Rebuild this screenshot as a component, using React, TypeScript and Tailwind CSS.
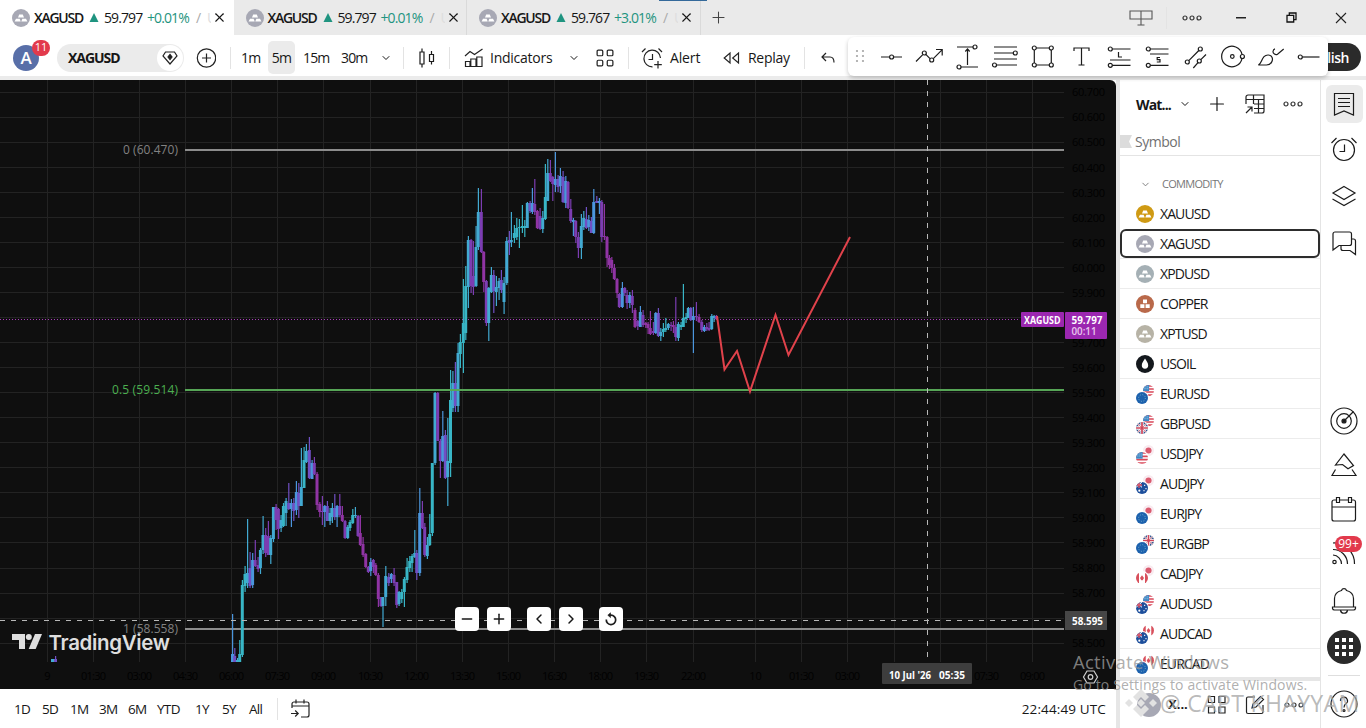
import React from 'react';
import { ChevronDown, ChevronLeft, ChevronRight, Minus, Plus, X } from 'lucide-react';

type Candle = [number, number, number, number, number, number];

// x, high, low, body top, body bottom, 1 = up / 0 = down
const candles: Candle[] = [
  [52.5, 659, 662, 659, 662, 1], [55.5, 656, 662, 659, 662, 0],
  [232.5, 614, 662, 654, 662, 1], [234.7, 648, 662, 656, 662, 0], [237.5, 658, 662, 660, 662, 1], [239.7, 640, 662, 654, 662, 1],
  [242.3, 580, 657, 585, 655, 1], [245, 566, 592, 574, 586, 1], [247.5, 519, 588, 573, 583, 1], [250, 552, 588, 568, 586, 0],
  [252.6, 553, 588, 560, 585, 1], [255.2, 540, 567, 560, 566, 0], [258, 557, 572, 565, 569, 0], [260.4, 548, 574, 550, 568, 1],
  [263, 516, 554, 535, 550, 1], [265.6, 528, 557, 535, 553, 0], [268.3, 521, 555, 536, 555, 0], [270.7, 535, 564, 538, 555, 1],
  [273.4, 507, 542, 507, 539, 1], [276, 504, 530, 507, 520, 0], [278.4, 508, 539, 509, 529, 0], [281, 515, 532, 520, 528, 1],
  [283.4, 503, 527, 506, 526, 1], [286, 498, 526, 501, 513, 1], [288.7, 483, 510, 503, 509, 0], [291.3, 499, 527, 503, 509, 1],
  [293.7, 498, 521, 503, 511, 0], [296.3, 481, 515, 492, 510, 1], [298.7, 483, 518, 493, 506, 0], [301.3, 448, 506, 487, 506, 1],
  [304, 447, 488, 460, 488, 1], [306.3, 444, 463, 451, 462, 1], [309.3, 437, 479, 450, 478, 0], [312, 460, 479, 463, 479, 1],
  [314.3, 457, 475, 463, 474, 0], [317, 472, 510, 474, 505, 0], [319.7, 502, 517, 504, 512, 0], [322.3, 496, 525, 511, 512, 0],
  [324.7, 505, 527, 506, 512, 1], [327.3, 501, 521, 506, 521, 0], [330, 508, 525, 513, 521, 1], [332.3, 503, 523, 508, 517, 1],
  [334.7, 494, 520, 508, 517, 0], [337, 505, 527, 506, 517, 1], [339.7, 494, 517, 506, 515, 0], [342.3, 506, 522, 515, 521, 0],
  [345, 520, 539, 521, 538, 0], [347.7, 525, 539, 527, 538, 1], [350, 520, 531, 522, 528, 1], [352.7, 509, 524, 515, 523, 1],
  [355.3, 507, 518, 515, 516, 1], [358, 515, 537, 516, 536, 0], [360.3, 515, 546, 533, 545, 0], [363, 537, 557, 544, 555, 0],
  [365.7, 553, 568, 554, 567, 0], [368.3, 566, 573, 567, 572, 0], [370.7, 558, 576, 562, 571, 1], [373.3, 559, 573, 560, 567, 0],
  [375.7, 563, 576, 565, 575, 0], [378.3, 573, 607, 575, 599, 0], [381, 597, 607, 597, 606, 0], [382.9, 597, 627, 597, 606, 1],
  [385.7, 566, 606, 576, 597, 1], [388.7, 573, 586, 577, 583, 0], [391.3, 573, 583, 574, 579, 1], [394, 568, 586, 575, 583, 0],
  [396.7, 582, 608, 582, 605, 0], [399, 591, 606, 592, 604, 1], [401.7, 589, 603, 592, 599, 1], [404.3, 577, 607, 579, 592, 1],
  [407, 558, 583, 567, 580, 1], [409.7, 556, 572, 561, 568, 1], [412, 554, 572, 556, 563, 1], [414.7, 530, 558, 553, 557, 1],
  [416.7, 550, 580, 553, 573, 0], [419.7, 488, 576, 513, 573, 1], [422.3, 501, 529, 513, 528, 0], [424.7, 523, 557, 527, 555, 0],
  [427.3, 537, 559, 545, 556, 1], [429.7, 514, 546, 534, 545, 1], [432.3, 463, 536, 463, 533, 1], [435, 392, 465, 393, 463, 1],
  [437.7, 392, 441, 393, 441, 0], [440.3, 439, 478, 441, 461, 0], [442.7, 411, 462, 436, 461, 1], [445.3, 430, 479, 435, 478, 0],
  [447.7, 418, 506, 461, 477, 1], [450.5, 370, 477, 400, 463, 1], [452.8, 371, 412, 383, 408, 1], [455.3, 362, 412, 383, 406, 0],
  [458, 343, 412, 353, 406, 1], [460.3, 334, 368, 342, 354, 1], [463.3, 279, 373, 323, 343, 1], [465.7, 266, 340, 286, 333, 1],
  [468.3, 236, 308, 240, 287, 1], [471, 239, 293, 240, 286, 0], [473.3, 241, 295, 276, 287, 0], [476, 226, 287, 247, 286, 1],
  [478.3, 188, 250, 212, 247, 1], [481.3, 189, 253, 212, 252, 0], [483.7, 251, 292, 252, 282, 0], [486.3, 280, 326, 281, 323, 0],
  [488.7, 287, 341, 288, 323, 1], [491.3, 267, 293, 275, 292, 1], [493.7, 270, 313, 275, 291, 0], [496.3, 276, 306, 287, 292, 1],
  [499, 278, 300, 281, 288, 1], [501.3, 270, 293, 280, 290, 0], [504, 277, 314, 283, 302, 1], [506.7, 237, 285, 241, 283, 1],
  [509.3, 231, 255, 240, 243, 0], [511.3, 212, 247, 240, 242, 1], [514.3, 225, 243, 233, 238, 1], [516.7, 218, 240, 228, 237, 1],
  [519.3, 219, 248, 227, 228, 1], [522.3, 205, 233, 226, 228, 1], [524.7, 220, 237, 226, 228, 1], [527.3, 202, 228, 203, 228, 1],
  [530, 201, 213, 203, 211, 0], [532.3, 188, 214, 203, 212, 1], [534.7, 179, 215, 204, 212, 0], [537.3, 210, 229, 211, 228, 0],
  [540, 208, 230, 216, 229, 0], [542.7, 211, 233, 218, 229, 1], [545.3, 164, 220, 197, 219, 1], [547.7, 159, 201, 173, 201, 1],
  [550.3, 160, 182, 173, 181, 0], [552.7, 176, 201, 177, 184, 0], [555.3, 152, 192, 179, 185, 1], [558, 175, 192, 179, 187, 0],
  [560.3, 168, 193, 176, 186, 1], [563, 171, 203, 177, 202, 0], [565.7, 176, 208, 181, 203, 1], [568, 181, 209, 182, 208, 0],
  [570.7, 199, 223, 209, 221, 0], [573.3, 218, 236, 220, 222, 1], [575.7, 220, 243, 221, 237, 0], [578.3, 232, 258, 237, 248, 0],
  [581.3, 214, 259, 226, 248, 1], [583.7, 211, 230, 218, 227, 1], [586.3, 207, 229, 219, 228, 0], [588.7, 215, 231, 220, 227, 1],
  [591.3, 217, 233, 221, 233, 0], [593.7, 189, 234, 202, 233, 1], [596.7, 196, 203, 201, 203, 0], [599.3, 198, 214, 201, 203, 1],
  [601.7, 200, 242, 202, 237, 0], [604.3, 204, 240, 236, 237, 0], [607, 236, 267, 237, 258, 0], [609.3, 255, 269, 258, 265, 0],
  [611.7, 257, 273, 260, 268, 0], [614.3, 264, 280, 268, 279, 0], [617, 278, 298, 279, 293, 0], [619.3, 293, 308, 294, 307, 0],
  [622.3, 282, 308, 288, 307, 1], [624.7, 287, 296, 288, 293, 0], [627, 290, 309, 295, 303, 0], [629.7, 292, 308, 295, 303, 1],
  [632.3, 290, 313, 296, 305, 0], [635, 308, 328, 310, 327, 0], [637.7, 320, 330, 321, 326, 0], [640.3, 306, 327, 312, 327, 1],
  [643, 310, 327, 315, 325, 0], [645.7, 322, 328, 323, 325, 0], [648, 322, 334, 324, 328, 0], [650.3, 311, 335, 328, 334, 0],
  [653.3, 322, 335, 331, 333, 0], [655.7, 312, 334, 313, 333, 1], [658.3, 308, 337, 313, 336, 0], [660.7, 328, 341, 332, 336, 1],
  [663.3, 323, 337, 329, 332, 1], [665.7, 318, 332, 328, 330, 1], [668.3, 323, 330, 324, 328, 1], [671, 322, 331, 325, 326, 0],
  [673.3, 321, 333, 325, 327, 0], [675.7, 297, 341, 327, 337, 0], [678.3, 322, 341, 324, 338, 1], [681, 322, 330, 325, 327, 1],
  [683.3, 284, 327, 318, 327, 1], [686, 313, 323, 317, 319, 1], [688.3, 307, 318, 308, 318, 1], [690.7, 307, 321, 308, 320, 0],
  [693.3, 307, 353, 316, 320, 1], [696.3, 302, 321, 316, 317, 0], [699, 314, 323, 317, 322, 0], [701.7, 320, 332, 322, 330, 0],
  [704.3, 325, 332, 327, 331, 1], [706.7, 323, 331, 327, 329, 0], [709, 322, 331, 328, 330, 0], [711.7, 314, 330, 316, 329, 1],
  [714, 315, 322, 316, 318, 1], [716.3, 315, 320, 316, 319, 0],
];

const candleColor = (i: number) => {
  const up = candles[i][5];
  const next = candles[i + 1] ? candles[i + 1][5] : up;
  const prev = candles[i - 1] ? candles[i - 1][5] : up;
  const mixed = next !== up && prev !== up;
  const half = next !== up || prev !== up;
  if (up) return mixed ? '#4b96dd' : half ? '#42aad2' : '#38b6c6';
  return mixed ? '#7050c4' : half ? '#7c3db2' : '#9034a4';
};

const timeLabels: [number, string][] = [
  [47.5, '9'], [93.5, '01:30'], [139.5, '03:00'], [185.5, '04:30'], [231.5, '06:00'], [277.5, '07:30'], [323.5, '09:00'],
  [370.5, '10:30'], [416.5, '12:00'], [462.5, '13:30'], [508.5, '15:00'], [554.5, '16:30'], [600.5, '18:00'], [646.5, '19:30'],
  [693.5, '22:00'], [755.5, '10'], [801.5, '01:30'], [847.5, '03:00'], [894.5, ''], [940.5, ''], [986.5, '07:30'], [1032.5, '09:00'],
];

const priceY = (price: number) => 150 + (60.47 - price) * 250.3;
const prices = Array.from({ length: 23 }, (_, i) => 60.7 - i * 0.1);
// labels that sit behind the last price and the crosshair price
const coveredPrices = ['59.800', '58.600'];

const Chart: React.FC = () => (
  <svg className="block" width="1116" height="609" viewBox="0 80 1116 609">
    <g stroke="#232323" strokeWidth="1">
      {timeLabels.map(([x]) => <line key={x} x1={x} x2={x} y1="80" y2="662" />)}
      {prices.map(p => <line key={p} x1="0" x2="1064" y1={Math.floor(priceY(p)) + 0.5} y2={Math.floor(priceY(p)) + 0.5} />)}
    </g>
    <g fill="#010101" fontSize="11" fontWeight="500">
      {timeLabels.filter(([, label]) => label).map(([x, label]) => (
        <text key={x} x={x} y="679.5" textAnchor="middle" textLength={label.length > 2 ? 25 : undefined}>{label}</text>
      ))}
      {prices.filter(p => !coveredPrices.includes(p.toFixed(3))).map(p => (
        <text key={p} x="1072" y={priceY(p) + 4} textLength="33">{p.toFixed(3)}</text>
      ))}
    </g>

    <g fontSize="12">
      <text x="123" y="154" fill="#828282" textLength="55">0 (60.470)</text>
      <text x="112" y="394" fill="#4caf50" textLength="66">0.5 (59.514)</text>
      <text x="123" y="633" fill="#828282" textLength="55">1 (58.558)</text>
    </g>
    <line x1="185" x2="1064" y1="150" y2="150" stroke="#8c8c8c" strokeWidth="2" />
    <line x1="185" x2="1064" y1="629" y2="629" stroke="#8c8c8c" strokeWidth="2" />
    <line x1="0" x2="1020" y1="319.5" y2="319.5" stroke="#a83cba" strokeDasharray="1 2" />

    {candles.map(([x, high, low, top, bottom], i) => (
      <g key={i} fill={candleColor(i)}>
        <rect x={x - 0.5} y={high} width="1.2" height={low - high} />
        <rect x={x - 1.5} y={top} width="3" height={Math.max(1, bottom - top)} />
      </g>
    ))}

    <line x1="185" x2="1064" y1="390" y2="390" stroke="#56a556" strokeWidth="2" />
    <path d="M717 316L724.5 369.5L737 351L750 391.5L775.5 315L788.5 355L850 237" fill="none" stroke="#e0424b" strokeWidth="2" />

    <g stroke="#b8b8b8" strokeDasharray="5 6">
      <line x1="0" x2="1064" y1="620.5" y2="620.5" />
      <line x1="927.5" x2="927.5" y1="80" y2="662" />
    </g>

    <g fill="#dedede">
      <path d="M12 634H25V649H19V640H12Z" />
      <circle cx="28.8" cy="637" r="3" />
      <path d="M35 634H42L35.7 649H28.7Z" />
      <text x="48.5" y="649.5" fontSize="20.5" fontWeight="600" fontFamily="Inter, sans-serif" textLength="121.5">TradingView</text>
    </g>

    <g fill="#9b27b0">
      <rect x="1021" y="312" width="43" height="15" rx="1" />
      <rect x="1065" y="312" width="42" height="27" rx="1" />
    </g>
    <rect x="1065" y="611" width="42" height="19" fill="#464646" />
    <rect x="882" y="663" width="90" height="21" rx="1" fill="#3d3d3d" />
    <g fill="#fff" fontSize="11" fontWeight="700">
      <text x="1024" y="323.5" textLength="36.5" lengthAdjust="spacingAndGlyphs">XAGUSD</text>
      <text x="1071.5" y="323.5" textLength="31" lengthAdjust="spacingAndGlyphs">59.797</text>
      <text x="1071.5" y="335" textLength="25" lengthAdjust="spacingAndGlyphs" fontWeight="600" fill="#e9c8ee">00:11</text>
      <text x="1072" y="624.5" textLength="31" lengthAdjust="spacingAndGlyphs">58.595</text>
      <text x="889" y="679" textLength="42" lengthAdjust="spacingAndGlyphs">10 Jul '26</text>
      <text x="939" y="679" textLength="26" lengthAdjust="spacingAndGlyphs">05:35</text>
    </g>
    <g fill="none" stroke="#d0d0d0" strokeWidth="1.2">
      <path d="M1087 671H1094L1097.5 677L1094 683H1087L1083.5 677Z" />
      <circle cx="1090.5" cy="677" r="2.3" />
    </g>
  </svg>
);

const Icon: React.FC<{ size?: number; children: React.ReactNode; className?: string }> = ({ size = 28, children, className = '' }) => (
  <svg width={size} height={size} viewBox="0 0 28 28" fill="none" stroke="#1c1c1c" strokeWidth="1.2" className={`shrink-0 ${className}`}>{children}</svg>
);

const Metal: React.FC<{ color: string }> = ({ color }) => (
  <svg width="18" height="18" viewBox="0 0 18 18" className="shrink-0">
    <circle cx="9" cy="9" r="9" fill={color} />
    <path fill="#fff" d="M7.2 5.6H10.8L12 8.6H6ZM4 9.7H7.6L8.7 12.4H2.6ZM10.4 9.7H14L15.4 12.4H9.3Z" />
  </svg>
);

const Flag: React.FC<{ code: string; size: number; className: string }> = ({ code, size, className }) => (
  <svg width={size} height={size} viewBox="0 0 18 18" className={`rounded-full absolute ${className}`}>
    {code === 'EUR' && <><rect width="18" height="18" fill="#1c61ad" /><circle cx="9" cy="9" r="5" fill="none" stroke="#7fb6d2" strokeWidth="1.3" strokeDasharray="1.6 2.3" /></>}
    {code === 'USD' && <><rect width="18" height="18" fill="#fff" /><path d="M0 1.5H18M0 6.5H18M0 11.5H18M0 16.5H18" stroke="#d9485a" strokeWidth="2.6" /><rect width="10" height="10" fill="#3f88c5" /><path d="M1 3H9M1 6H9" stroke="#d5e8f7" strokeDasharray="1.5 1.5" /></>}
    {code === 'GBP' && <><rect width="18" height="18" fill="#38588f" /><path d="M0 0L18 18M18 0L0 18" stroke="#fff" strokeWidth="2.4" /><path d="M9 0V18M0 9H18" stroke="#fff" strokeWidth="5" /><path d="M9 0V18M0 9H18" stroke="#d0455a" strokeWidth="2.6" /><path d="M0 0L18 18M18 0L0 18" stroke="#d0455a" strokeWidth="1" /></>}
    {code === 'JPY' && <><rect width="18" height="18" fill="#f9ebf0" /><circle cx="9" cy="9" r="5" fill="#d95a6e" /></>}
    {code === 'AUD' && <><rect width="18" height="18" fill="#1d4f9c" /><path d="M0 0L9 8M9 0L0 8" stroke="#fff" strokeWidth="1.5" /><path d="M4.5 0V9M0 4.5H9" stroke="#e05060" strokeWidth="2" /><circle cx="5" cy="13" r="1.6" fill="#fff" /><path d="M13 4v2M12 12v2M15 9v2" stroke="#fff" strokeWidth="1.6" /></>}
    {code === 'CAD' && <><rect width="18" height="18" fill="#fff" /><path d="M0 0H4.5V18H0ZM13.5 0H18V18H13.5ZM9 5L12 9L10 12.5H8L6 9Z" fill="#d8505c" /></>}
  </svg>
);

const SymbolIcon: React.FC<{ symbol: string }> = ({ symbol }) => {
  if (symbol === 'XAUUSD') return <Metal color="#cf9a14" />;
  if (symbol === 'XAGUSD') return <Metal color="#a7a8b4" />;
  if (symbol === 'XPDUSD') return <Metal color="#a5b0b5" />;
  if (symbol === 'XPTUSD') return <Metal color="#b7b3a6" />;
  if (symbol === 'COPPER') {
    return (
      <svg width="18" height="18" viewBox="0 0 18 18" className="shrink-0">
        <circle cx="9" cy="9" r="9" fill="#b9694a" />
        <path fill="#fff" d="M7 4.5H11V8.3H7ZM4.3 9.3H8.4V13H4.3ZM9.6 9.3H13.7V13H9.6Z" />
      </svg>
    );
  }
  if (symbol === 'USOIL') {
    return (
      <svg width="18" height="18" viewBox="0 0 18 18" className="shrink-0">
        <circle cx="9" cy="9" r="9" fill="#14181d" />
        <path fill="#fff" d="M9 3.5C10.5 6 12.2 8 12.2 10.3A3.2 3.4 0 0 1 5.8 10.3C5.8 8 7.5 6 9 3.5Z" />
      </svg>
    );
  }
  return (
    <div className="relative w-[18px] h-[18px] shrink-0">
      <Flag code={symbol.slice(3)} size={11} className="top-0 right-0" />
      <Flag code={symbol.slice(0, 3)} size={12} className="-bottom-px left-0 ring-1 ring-white" />
    </div>
  );
};

const symbols = [
  'XAUUSD', 'XAGUSD', 'XPDUSD', 'COPPER', 'XPTUSD', 'USOIL', 'EURUSD', 'GBPUSD',
  'USDJPY', 'AUDJPY', 'EURJPY', 'EURGBP', 'CADJPY', 'AUDUSD', 'AUDCAD', 'EURCAD',
];

const Tab: React.FC<{ price: string; change: string; active?: boolean }> = ({ price, change, active }) => (
  <div className={`w-[233.5px] h-[35px] flex items-center pl-3 shrink-0 text-[14px] ${active ? 'bg-white' : 'border-r border-[#dadada]'}`}>
    <Metal color="#a7a8b4" />
    <span className="ml-1 w-[55px] font-semibold tracking-[-0.09em]">XAGUSD</span>
    <span className="w-[15px] text-[#1f9480]"><svg width="10" height="9" viewBox="0 0 10 9"><path d="M5 0L9.5 9H0.5Z" fill="currentColor" /></svg></span>
    <span className="w-[43px] font-medium tracking-[-0.065em]">{price}</span>
    <span className="w-[49px] font-medium tracking-[-0.065em] text-[#1f9480]">{change}</span>
    <span className="w-[11px] text-[#aaa]">/</span>
    <span className="w-[4px] overflow-hidden text-[#dedede]">U</span>
    <X className="w-[15px] h-[15px] ml-px shrink-0" strokeWidth={1.7} />
  </div>
);

const Sep: React.FC<{ className?: string }> = ({ className = '' }) => <span className={`w-px h-[22px] shrink-0 bg-[#e3e3e3] ${className}`} />;

const Dots: React.FC<{ className?: string }> = ({ className = '' }) => (
  <svg width="20" height="6" viewBox="0 0 20 6" fill="none" stroke="#333" strokeWidth="1.2" className={className}>
    <circle cx="3" cy="3" r="2" /><circle cx="10" cy="3" r="2" /><circle cx="17" cy="3" r="2" />
  </svg>
);

const TitleBar: React.FC = () => (
  <div className="h-[35px] flex items-center bg-[#eaeaea] relative">
    <div className="absolute top-0 left-[659px] w-12 h-px bg-[#34699a]" />
    <Tab active price="59.797" change="+0.01%" />
    <Tab price="59.797" change="+0.01%" />
    <Tab price="59.767" change="+3.01%" />
    <Plus className="w-[19px] h-[19px] ml-[8px] text-[#444]" strokeWidth={1.3} />
    <div className="ml-auto flex items-center">
      <svg width="24" height="16" viewBox="0 0 24 16" fill="none" stroke="#555" strokeWidth="1.1"><path d="M1 1H23V9H1ZM12 1V15M8.5 15H15.5" /></svg>
      <Sep className="ml-[13px] h-[20px]" />
      <Dots className="ml-[15px]" />
      <svg width="10" height="2" className="ml-[34px]"><rect width="10" height="1.5" fill="#222" /></svg>
      <svg width="11" height="11" viewBox="0 0 11 11" fill="none" stroke="#111" strokeWidth="1.3" className="ml-[40px]"><path d="M1 3.3H7.7V10H1ZM3.3 3V1H10V7.7H8" /></svg>
      <svg width="12" height="12" viewBox="0 0 12 12" stroke="#222" strokeWidth="1.1" className="ml-[38px] mr-[19px]"><path d="M1 1L11 11M11 1L1 11" /></svg>
    </div>
  </div>
);

const drawTools: React.ReactNode[] = [
  <><path d="M4 14H12.5M16.7 14H25" /><circle cx="14.6" cy="14" r="2" /></>,
  <><path d="M1 18.5L7.8 11.6M10.8 11.4L15 15.6M18.3 15.6L27 6.8M21 6.5H27.2V12.5" /><circle cx="9.3" cy="10" r="2" /><circle cx="16.7" cy="17" r="2" /></>,
  <><path d="M4 4H20M8 24H25M14.5 22V6M12.3 8.5L14.5 6L16.7 8.5" /><circle cx="22" cy="4" r="2" /><circle cx="6" cy="24" r="2" /></>,
  <><path d="M3 4H26M3 10H22.3M3 16H26M5.5 22H26" /><circle cx="24.3" cy="10" r="2" /><circle cx="3.5" cy="22" r="2" /></>,
  <><path d="M7.3 5H20.3M7.3 22H20.3M5.3 7V20M22.3 7V20" /><circle cx="5.3" cy="5" r="2" /><circle cx="22.3" cy="5" r="2" /><circle cx="5.3" cy="22" r="2" /><circle cx="22.3" cy="22" r="2" /></>,
  <path d="M7 8V5H22V8M14.5 5V22M11.5 22H17.5" />,
  <><path d="M7.3 6H25.5M5 17H25.5M7.3 22.3H25.5M13.5 9V14H17" /><circle cx="5.3" cy="6" r="2" /><circle cx="5.3" cy="22.3" r="2" /></>,
  <><path d="M7.3 6H25.5M7 11H25.5M7.3 22.3H25.5M17 14.5H14.2V16.7H17V19H13.8" /><circle cx="5.3" cy="6" r="2" /><circle cx="5.3" cy="22.3" r="2" /></>,
  <><path d="M7.8 17.6L17.8 7.5M12.3 25L17 19.6M19.8 16.6L25 11.5" /><circle cx="6.3" cy="19" r="2" /><circle cx="19.3" cy="6" r="2" /><circle cx="18.3" cy="18" r="2" /></>,
  <><path d="M23 11.3A10.3 10.3 0 1 0 23 15.7" /><circle cx="13.3" cy="13.5" r="1.8" /><circle cx="23.4" cy="13.5" r="2" /></>,
  <><path d="M1.3 22C4.5 21 4 17 7 13.7C9.5 11.2 13.5 11.5 15 14.3C16.5 17.5 14 22 9.5 22ZM26.7 6L20.5 11.2C18.5 12.5 15.8 10.5 16 8.5C16.2 7 17 6 18 5.8" /></>,
  <><path d="M7.3 14H24.5" /><circle cx="5.3" cy="14" r="2" /></>,
];

const Toolbar: React.FC = () => (
  <div className="h-[45px] pt-1 bg-white border-b-4 border-[#ebebeb] flex items-center relative text-[14px] font-medium">
    <div className="relative ml-[13px] w-[26px] h-[26px] rounded-full bg-[#586fa8] text-white text-[17px] font-semibold flex items-center justify-center">
      A
      <span className="absolute -top-[5px] left-[19px] w-[18px] h-4 rounded-full bg-[#e23a4c] text-[11px] font-normal flex items-center justify-center">11</span>
    </div>
    <div className="ml-[18px] w-[127px] h-7 rounded-full bg-[#ebebeb] flex items-center justify-between pl-[11px] pr-px">
      <span className="font-bold tracking-[-0.075em]">XAGUSD</span>
      <span className="w-[26px] h-[26px] rounded-full bg-white flex items-center justify-center">
        <svg width="16" height="14" viewBox="0 0 16 14" fill="none" stroke="#222" strokeWidth="1.2"><path d="M3.5 1H12.5L15 5L8 13L1 5Z" /><path d="M8 3.4L10 6L8 8.6L6 6Z" fill="#222" /></svg>
      </span>
    </div>
    <svg width="20" height="20" viewBox="0 0 20 20" fill="none" stroke="#222" strokeWidth="1.2" className="ml-[12px]"><circle cx="10.5" cy="10" r="9.2" /><path d="M10.5 5.5V14.5M6 10H15" /></svg>
    <Sep className="ml-[14px]" />
    <span className="ml-[10px] w-[27px] tracking-[-0.05em]">1m</span>
    <span className="w-[27px] h-[33px] rounded-[5px] bg-[#ebebeb] flex items-center justify-center tracking-[-0.05em]">5m</span>
    <span className="ml-[8px] w-[38px] tracking-[-0.06em]">15m</span>
    <span className="w-[39px] tracking-[-0.06em]">30m</span>
    <ChevronDown className="w-3 h-3" strokeWidth={2} />
    <Sep className="ml-[11px]" />
    <Icon className="ml-[9px]"><path d="M7 8H11V20H7ZM9 8V4.5M9 20V23.5M16.5 10.5H20.5V17.5H16.5ZM18.5 10.5V7M18.5 17.5V20.5" /></Icon>
    <Sep className="ml-[8px]" />
    <svg width="20" height="20" viewBox="0 0 20 20" fill="none" stroke="#222" strokeWidth="1.2" className="ml-[14px]"><path d="M1.5 18.5V13.5H6V18.5ZM6.8 18.5V11H12V18.5ZM12.8 18.5V9H18V18.5ZM1 8L6 3.5L10.5 6.5L18.5 1" /></svg>
    <span className="ml-[6px] w-[78px] tracking-[-0.018em]">Indicators</span>
    <ChevronDown className="w-3 h-3" strokeWidth={2} />
    <svg width="18" height="18" viewBox="0 0 16 16" fill="none" stroke="#222" strokeWidth="1.1" className="ml-[16px]"><rect x="1" y="1" width="5" height="5" rx="1" /><rect x="10" y="1" width="5" height="5" rx="1" /><rect x="1" y="10" width="5" height="5" rx="1" /><rect x="10" y="10" width="5" height="5" rx="1" /></svg>
    <Sep className="ml-[14px]" />
    <svg width="22" height="22" viewBox="0 0 22 22" fill="none" stroke="#222" strokeWidth="1.2" className="ml-[12px]"><path d="M19.5 11A8.3 8.3 0 1 0 11.5 19.8M11.5 7V12.5H7.5M1 5L4.5 1.5M17.5 1.5L21 5M17 14V21.5M13.2 17.7H20.8" /></svg>
    <span className="ml-[7px] w-[53px] tracking-[-0.01em]">Alert</span>
    <svg width="17" height="14" viewBox="0 0 17 14" fill="none" stroke="#222" strokeWidth="1.2"><path d="M7 2V12L1.2 7ZM15.5 2V12L9.7 7Z" /></svg>
    <span className="ml-[8px] w-[56px] tracking-[-0.02em]">Replay</span>
    <Sep />
    <svg width="14" height="12" viewBox="0 0 14 12" fill="none" stroke="#222" strokeWidth="1.2" className="ml-[16px]"><path d="M5 1L1 5L5 9M1 5H9C11.5 5 13 6.8 13 10.5" /></svg>

    <div className="absolute right-[5px] top-2 w-[60px] h-7 rounded-full bg-[#2b2b2b] text-white flex items-center justify-end pr-3 font-semibold tracking-[-0.03em]">Publish</div>
    <div className="absolute left-[848px] top-[2px] w-[480px] h-[39px] bg-white rounded-md shadow-[0_2px_4px_rgba(0,0,0,0.22)] flex items-center pt-px">
      <svg width="24" height="14" viewBox="0 0 24 14" fill="#b5b5b5"><path d="M8 0h2v2h-2zM14 0h2v2h-2zM8 5h2v2h-2zM14 5h2v2h-2zM8 10h2v2h-2zM14 10h2v2h-2z" /></svg>
      {drawTools.map((tool, i) => <span key={i} className="w-[38.1px] flex justify-center"><Icon>{tool}</Icon></span>)}
    </div>
  </div>
);

const ranges: [string, string][] = [
  ['1D', 'w-7'], ['5D', 'w-7'], ['1M', 'w-[29px]'], ['3M', 'w-[29px]'], ['6M', 'w-[29px]'],
  ['YTD', 'w-[38px]'], ['1Y', 'w-[27px]'], ['5Y', 'w-[27px]'], ['All', 'w-7'],
];

const Reset: React.FC<{ className?: string; strokeWidth?: number }> = () => (
  <svg width="14" height="14" viewBox="0 0 14 14" fill="none" stroke="#1c1c1c" strokeWidth="1.7"><path d="M2.3 7.5A4.7 4.7 0 1 0 7 3.2H5" /><path d="M6.5 0.8L3.8 3.2L6.5 5.6Z" fill="#1c1c1c" strokeWidth="0.6" /></svg>
);

const chartButtons = [
  { icon: Minus, margin: '' }, { icon: Plus, margin: 'ml-2' }, { icon: ChevronLeft, margin: 'ml-4' },
  { icon: ChevronRight, margin: 'ml-2' }, { icon: Reset, margin: 'ml-4' },
];

const ChartPane: React.FC = () => (
  <div className="w-[1116px] shrink-0">
    <div className="relative bg-[#0f0f0f] rounded-tr-md overflow-hidden h-[609px]">
      <Chart />
      <div className="absolute left-[455px] top-[527px] flex">
        {chartButtons.map(({ icon: Glyph, margin }, i) => (
          <button key={i} className={`w-6 h-6 rounded bg-white flex items-center justify-center ${margin}`}>
            <Glyph className="w-4 h-4" strokeWidth={2.2} />
          </button>
        ))}
      </div>
    </div>
    <div className="h-[39px] pt-px flex items-center pl-[14px] pr-[10px] text-[13.5px] font-medium tracking-[-0.05em]">
      {ranges.map(([label, width]) => <span key={label} className={width}>{label}</span>)}
      <Sep />
      <svg width="20" height="20" viewBox="0 0 20 20" fill="none" stroke="#222" strokeWidth="1.2" className="ml-[12px]"><path d="M2 9V5A2 2 0 0 1 4 3H17A2 2 0 0 1 19 5V16A2 2 0 0 1 17 18H11M2 7H19M6 0.5V4.5M14 0.5V4.5M1 14.5H8M5.2 11.5L8.2 14.5L5.2 17.5" /></svg>
      <span className="ml-auto tracking-[0.01em]">22:44:49 UTC</span>
    </div>
  </div>
);

const Watchlist: React.FC = () => (
  <div className="w-[200px] shrink-0 bg-white flex flex-col">
    <div className="h-[48px] flex items-center pl-4">
      <span className="w-[43px] text-[14px] font-bold tracking-[-0.06em]">Wat...</span>
      <ChevronDown className="w-3 h-3" strokeWidth={2} />
      <Plus className="w-[22px] h-[22px] ml-[15px]" strokeWidth={1.3} />
      <svg width="20" height="20" viewBox="0 0 20 20" fill="none" stroke="#222" strokeWidth="1.2" className="ml-[17px]"><path d="M1 10V3A2 2 0 0 1 3 1H19V17A2 2 0 0 1 17 19H9M1 5.5H19M9 10H19M9 14.5H19M8.5 1V10M13.5 5.5V19M1 19L6.5 13.5M2.5 13H7V17.5" /></svg>
      <Dots className="ml-[18px]" />
    </div>
    <div className="h-[28px] flex items-center border-b border-[#e4e4e4] text-[14px] text-[#707070]">
      <svg width="12" height="13" viewBox="0 0 12 13" className="mr-[3px]"><path d="M0 0H12L9 6.5L12 13H0Z" fill="#dcdcdc" /></svg>
      <span className="tracking-[-0.035em]">Symbol</span>
    </div>
    <div className="h-[43px] flex items-center pl-5 pt-[13px] text-[11px] text-[#777] tracking-[-0.065em]">
      <ChevronDown className="w-[11px] h-[11px] mr-[11px]" strokeWidth={2} />COMMODITY
    </div>
    <div className="h-[478px] overflow-hidden">
      {symbols.map(symbol => (
        <div key={symbol} className={`h-[30px] flex items-center border-b relative ${symbol === 'XAUUSD' ? 'border-transparent' : 'border-[#ececec]'}`}>
          {symbol === 'XAGUSD' && <span className="absolute inset-x-0 top-0 h-[29px] border-2 border-[#2d2d2d] rounded-md" />}
          <span className="pl-4 flex items-center">
            <SymbolIcon symbol={symbol} />
            <span className="ml-[6px] text-[14px] tracking-[-0.065em]">{symbol}</span>
          </span>
        </div>
      ))}
    </div>
    <div className="h-1 bg-[#e6e6e6]" />
    <div className="flex-1 flex items-center pl-[17px]">
      <span className="w-6 h-6 rounded-full bg-[#a7a8b4] shrink-0" />
      <span className="ml-[7px] w-[36px] font-bold text-[13px]">X...</span>
      <svg width="20" height="20" viewBox="0 0 20 20" fill="none" stroke="#222" strokeWidth="1.2" className="ml-[3px]"><path d="M1.5 1.5h6v6h-6zM12 1.5h6v6h-6zM1.5 12h6v6h-6zM12 12h6v6h-6z" /></svg>
      <svg width="20" height="20" viewBox="0 0 20 20" fill="none" stroke="#222" strokeWidth="1.2" className="ml-[18px]"><path d="M10 2H3A1.5 1.5 0 0 0 1.5 3.5V17A1.5 1.5 0 0 0 3 18.5H16.5A1.5 1.5 0 0 0 18 17V10M7 13L8 9L15.5 1.5L18.5 4.5L11 12Z" /></svg>
      <Dots className="ml-[19px]" />
    </div>
  </div>
);

const SideRail: React.FC = () => (
  <div className="flex-1 bg-white border-l border-[#e4e4e4] flex flex-col items-center pt-[5px] pl-px">
    <span className="w-[37px] h-[38px] rounded-md bg-[#ebebeb] flex items-center justify-center">
      <Icon><path d="M4.5 3.5H23.5V25L14 21L4.5 25ZM8 8.5H20M8 12.5H20M8 16.5H20" /></Icon>
    </span>
    <Icon className="mt-[12px]"><circle cx="14" cy="15" r="10.5" /><path d="M14.5 9.5V16.5H9.5M1.5 8L6.5 3M21.5 3L26.5 8" /></Icon>
    <Icon className="mt-[19px]"><path d="M14 4.5L25 11L14 17.5L3 11ZM2.5 17L14 23.5L25.5 17" /></Icon>
    <Icon className="mt-[19px]"><path d="M5 3H19.5A2 2 0 0 1 21.5 5V14.5A2 2 0 0 1 19.5 16.5H9L3 21V5A2 2 0 0 1 5 3ZM21.5 10H23.5A2 2 0 0 1 25.5 12V25.5L20 21.5H13A2 2 0 0 1 11 19.5V16.5" /></Icon>
    <Icon className="mt-[150px]"><circle cx="14" cy="14" r="13" /><circle cx="14" cy="14" r="7.3" /><circle cx="14" cy="14" r="2" fill="#1c1c1c" /><path d="M14 14L23.5 4.5" /></Icon>
    <Icon className="mt-[16px]"><path d="M14 3L23.5 14.5L18 17.8L12.5 13.5L5.5 14Z" /><path d="M5.5 18.5L2 24.5H26L22 18.5" /></Icon>
    <Icon className="mt-[16px]"><path d="M6.5 5H4A2 2 0 0 0 2 7V24A2 2 0 0 0 4 26H23.5A2 2 0 0 0 25.5 24V7A2 2 0 0 0 23.5 5H21.5M9.5 5H18.5M2 12H25.5M6.5 2.5H9.5V7.5H6.5ZM18.5 2.5H21.5V7.5H18.5Z" /></Icon>
    <span className="relative mt-[16px]">
      <Icon><circle cx="4.5" cy="23" r="1.7" /><path d="M3 16A9 9 0 0 1 11.5 25M3 10.5A14.5 14.5 0 0 1 17.5 25M3 4A20.5 20.5 0 0 1 24.5 25" /></Icon>
      <span className="absolute left-[5px] -top-[3px] w-[27px] h-4 rounded-full bg-[#e23a4c] text-white text-[12px] flex items-center justify-center">99+</span>
    </span>
    <Icon className="mt-[20px]"><path d="M4.5 20V11.5A9.5 8.5 0 0 1 11.5 3.5A2.6 2.6 0 0 1 16.5 3.5A9.5 8.5 0 0 1 23.5 11.5V20M2.5 20H25.5V21.5A2 2 0 0 1 23.5 23H4.5A2 2 0 0 1 2.5 21.5ZM10.5 23.5A3.6 3.6 0 0 0 17.5 23.5" /></Icon>
    <span className="mt-[15px] w-[34px] h-[34px] rounded-full bg-[#2a2a2a] flex items-center justify-center">
      <svg width="18" height="18" viewBox="0 0 18 18" fill="#fff"><path d="M0 0h4v4H0zM7 0h4v4H7zM14 0h4v4h-4zM0 7h4v4H0zM7 7h4v4H7zM14 7h4v4h-4zM0 14h4v4H0zM7 14h4v4H7zM14 14h4v4h-4z" /></svg>
    </span>
    <span className="mt-[11px] w-8 h-px bg-[#dedede]" />
    <Icon className="mt-[14px]"><circle cx="14" cy="14" r="13" /><path d="M10.5 11A3.5 3.5 0 1 1 16 13.5C14.5 14.5 14 15.2 14 17.5" /><circle cx="14" cy="20.5" r="1" /></Icon>
  </div>
);

const App: React.FC = () => (
  <div className="relative w-[1366px] h-[728px] overflow-hidden bg-white text-[#171717] font-['Open_Sans',sans-serif]">
    <TitleBar />
    <Toolbar />
    <div className="flex h-[648px]">
      <ChartPane />
      <div className="w-1 shrink-0 bg-[#e6e6e6]" />
      <Watchlist />
      <SideRail />
    </div>

    <div className="absolute left-[1073px] top-[649px] whitespace-nowrap text-[#9a9a9a]/80 pointer-events-none">
      <p className="text-[18.5px] leading-[26px] tracking-[0.015em]">Activate Windows</p>
      <p className="text-[14px] leading-5 tracking-[0.01em]">Go to Settings to activate Windows.</p>
    </div>
    <div className="absolute left-[1124px] top-[687px] flex items-center whitespace-nowrap pointer-events-none text-[#a8a8a8]/80">
      <svg width="34" height="32" viewBox="0 0 34 32" fill="#e2e2e2"><path d="M17 2L25 10L21 14L17 10L13 14L9 10ZM5 12L9 16L5 20L1 16ZM29 12L33 16L29 20L25 16ZM17 12L21 16L17 20L13 16ZM13 18L17 22L21 18L25 22L17 30L9 22Z" /></svg>
      <span className="ml-[2px] text-[23px] leading-[32px] tracking-[0.015em]">@ CAPT KHAYYAM</span>
    </div>
  </div>
);

export default App;
